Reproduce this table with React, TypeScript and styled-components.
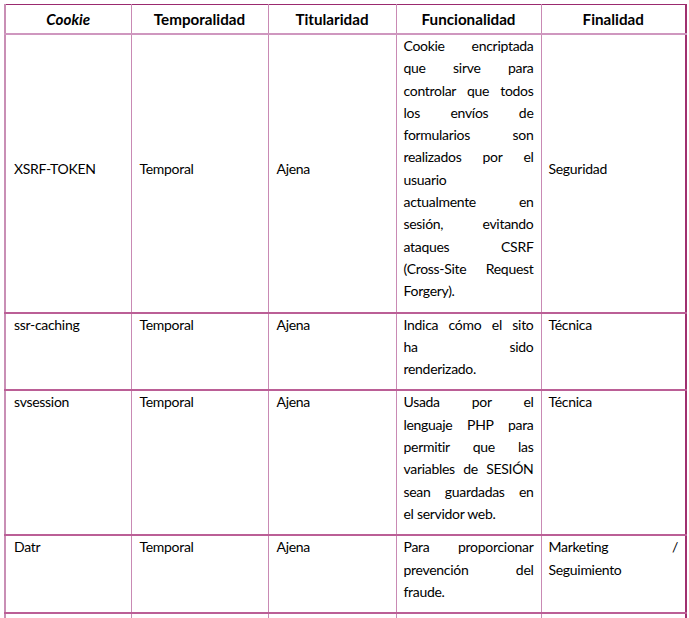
import React from 'react'
import styled, { createGlobalStyle } from 'styled-components'

const GlobalStyle = createGlobalStyle`
  html, body {
    margin: 0;
    padding: 0;
    background: #ffffff;
  }
  body {
    font-family: Lato, "Open Sans", "Liberation Sans", sans-serif;
    color: #000000;
  }
`

const Page = styled.div`
  padding: 4px 0 0 4px;
  width: 689px;
  height: 618px;
  overflow: hidden;
  box-sizing: border-box;
`

const Table = styled.table`
  border-collapse: collapse;
  table-layout: fixed;
  width: 681px;
  border-top: 1.5px solid #9b2a6f;
  border-right: 2px solid #a0306f;
  border-left: 2px solid #c98fb5;
`

const HeadCell = styled.th<{ $italic?: boolean }>`
  height: 28px;
  padding: 0 4px;
  font-size: 15.2px;
  font-weight: 700;
  font-style: ${p => (p.$italic ? 'italic' : 'normal')};
  text-align: center;
  vertical-align: middle;
  color: #000000;
  border-left: 1.5px solid #c98ab4;
  border-right: 1.5px solid #c98ab4;
  border-bottom: 2px solid #cf97bf;
`

const Cell = styled.td<{ $middle?: boolean; $height?: number }>`
  height: ${p => (p.$height ? `${p.$height}px` : 'auto')};
  padding: 0 7px 9px 8px;
  font-size: 14px;
  letter-spacing: -0.3px;
  line-height: 22.3px;
  vertical-align: ${p => (p.$middle ? 'middle' : 'top')};
  border-left: 1.5px solid #c98ab4;
  border-right: 1.5px solid #c98ab4;
  border-top: 2px solid #bb5f96;
  border-bottom: 2px solid #bb5f96;
`

const TextCell = styled(Cell)`
  padding: 0 7px 9px 7px;
`

const Line = styled.span<{ $last?: boolean }>`
  display: block;
  white-space: nowrap;
  text-align: justify;
  text-align-last: ${p => (p.$last ? 'left' : 'justify')};
`

type Row = {
  cookie: string
  funcionalidad: string[]
  finalidad: string[]
  middle?: boolean
}

const rows: Row[] = [
  {
    cookie: 'XSRF-TOKEN',
    middle: true,
    funcionalidad: [
      'Cookie encriptada',
      'que sirve para',
      'controlar que todos',
      'los envíos de',
      'formularios son',
      'realizados por el',
      'usuario',
      'actualmente en',
      'sesión, evitando',
      'ataques CSRF',
      '(Cross-Site Request',
      'Forgery).',
    ],
    finalidad: ['Seguridad'],
  },
  {
    cookie: 'ssr-caching',
    funcionalidad: ['Indica cómo el sito', 'ha sido', 'renderizado.'],
    finalidad: ['Técnica'],
  },
  {
    cookie: 'svsession',
    funcionalidad: [
      'Usada por el',
      'lenguaje PHP para',
      'permitir que las',
      'variables de SESIÓN',
      'sean guardadas en',
      'el servidor web.',
    ],
    finalidad: ['Técnica'],
  },
  {
    cookie: 'Datr',
    funcionalidad: ['Para proporcionar', 'prevención del', 'fraude.'],
    finalidad: ['Marketing /', 'Seguimiento'],
  },
]

const Lines: React.FC<{ lines: string[] }> = ({ lines }) => (
  <>
    {lines.map((l, i) => (
      <Line key={i} $last={i === lines.length - 1}>
        {l}
      </Line>
    ))}
  </>
)

export default function App() {
  return (
    <Page>
      <GlobalStyle />
      <Table>
        <colgroup>
          <col style={{ width: 126 }} />
          <col style={{ width: 137 }} />
          <col style={{ width: 128 }} />
          <col style={{ width: 145 }} />
          <col style={{ width: 145 }} />
        </colgroup>
        <thead>
          <tr>
            <HeadCell $italic>Cookie</HeadCell>
            <HeadCell>Temporalidad</HeadCell>
            <HeadCell>Titularidad</HeadCell>
            <HeadCell>Funcionalidad</HeadCell>
            <HeadCell>Finalidad</HeadCell>
          </tr>
        </thead>
        <tbody>
          {rows.map(r => (
            <tr key={r.cookie}>
              <Cell $middle={r.middle}>{r.cookie}</Cell>
              <Cell $middle={r.middle}>Temporal</Cell>
              <Cell $middle={r.middle}>Ajena</Cell>
              <TextCell>
                <Lines lines={r.funcionalidad} />
              </TextCell>
              <TextCell $middle={r.middle}>
                <Lines lines={r.finalidad} />
              </TextCell>
            </tr>
          ))}
          <tr>
            <Cell $height={80} />
            <Cell />
            <Cell />
            <TextCell />
            <TextCell />
          </tr>
        </tbody>
      </Table>
    </Page>
  )
}
